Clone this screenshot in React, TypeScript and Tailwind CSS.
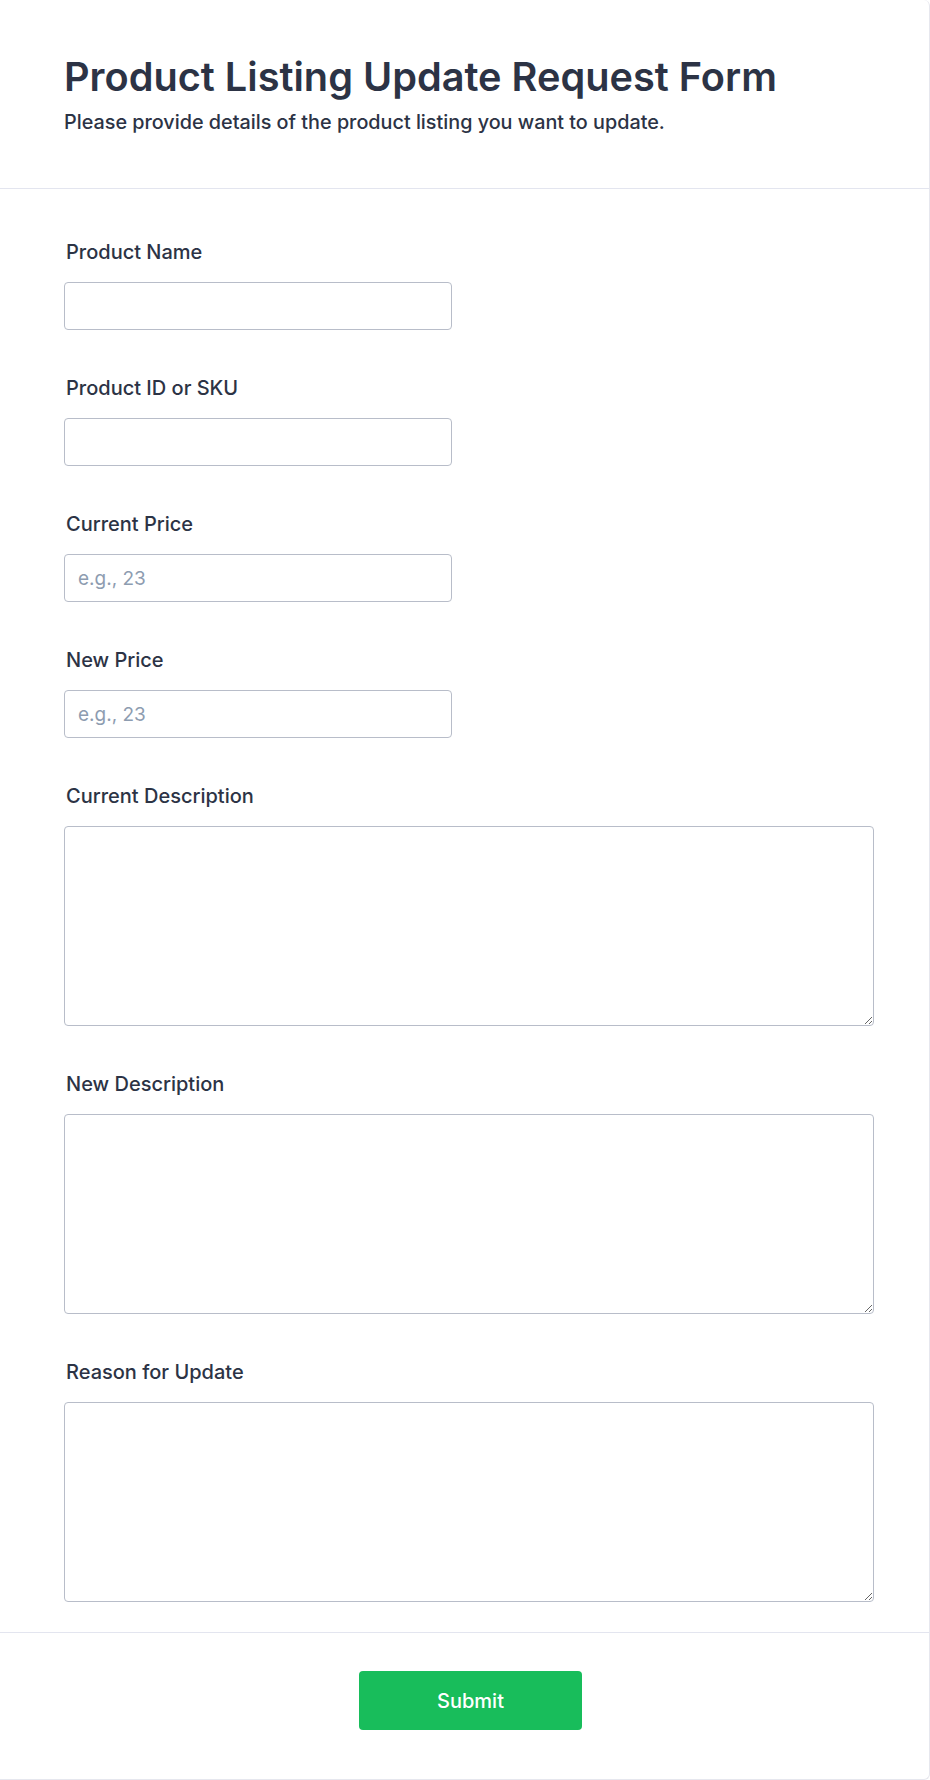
import React from 'react';

const font = { fontFamily: 'Inter, "Noto Sans", sans-serif' };

interface FieldProps {
  label:        string;
  placeholder?: string;
  multiline?:   boolean;
  last?:        boolean;
}

const Field = ({ label, placeholder, multiline = false, last = false }: FieldProps) => (
  <div className={`flex flex-col ${last ? '' : 'mb-[44px]'}`}>
    <label className="ml-[2px] mb-4 text-[20px] leading-[28px] font-medium text-[#2c3345]">
      {label}
    </label>
    {multiline ? (
      <textarea className="w-[810px] h-[200px] rounded-[4px] border border-[#b8bdc9] bg-white px-[14px] py-3 text-[19px] text-[#2c3345] outline-none" />
    ) : (
      <input
        type="text"
        placeholder={placeholder}
        className="w-[388px] h-12 rounded-[4px] border border-[#b8bdc9] bg-white px-[13px] text-[19px] text-[#2c3345] placeholder:text-[#8d9cb0] outline-none"
      />
    )}
  </div>
);

export default function App() {
  return (
    <div className="min-h-[1780px] bg-white" style={font}>
      <div className="w-[930px] h-[1780px] bg-white border-r border-b border-[#e6e7ee] rounded-tr-[6px] rounded-br-[6px] flex flex-col">
        {/* Header */}
        <div className="pl-16 pt-[53px] pb-[52px] border-b border-[#e3e5ef]">
          <h1 className="text-[39.7px] leading-[48px] font-semibold text-[#2c3345]">
            Product Listing Update Request Form
          </h1>
          <p className="mt-[7px] text-[19.8px] leading-[28px] font-medium text-[#2c3345]">
            Please provide details of the product listing you want to update.
          </p>
        </div>

        {/* Fields */}
        <div className="pl-16 pt-[49px]">
          <Field label="Product Name" />
          <Field label="Product ID or SKU" />
          <Field label="Current Price" placeholder="e.g., 23" />
          <Field label="New Price" placeholder="e.g., 23" />
          <Field label="Current Description" multiline />
          <Field label="New Description" multiline />
          <Field label="Reason for Update" multiline last />
        </div>

        {/* Footer */}
        <div className="mt-[30px] border-t border-[#e3e5ef] flex justify-center pt-[38px]">
          <button className="ml-3 w-[223px] h-[59px] rounded-[4px] bg-[#18bd5b] text-white text-[20px] font-medium">
            Submit
          </button>
        </div>
      </div>
    </div>
  );
}
